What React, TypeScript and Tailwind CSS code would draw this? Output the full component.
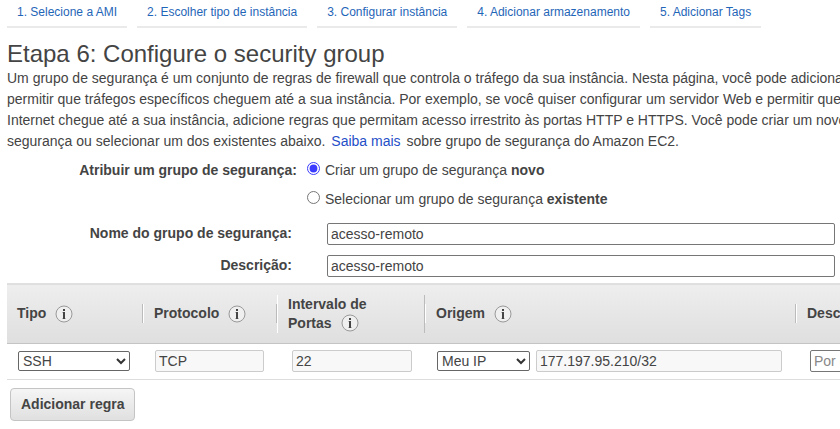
import type { ReactNode } from "react";

const steps = [
  "1. Selecione a AMI",
  "2. Escolher tipo de instância",
  "3. Configurar instância",
  "4. Adicionar armazenamento",
  "5. Adicionar Tags",
];

function InfoIcon() {
  return (
    <svg
      className="inline-block h-[18px] w-[18px] shrink-0"
      viewBox="0 0 18 18"
      role="img"
      aria-label="Informações"
    >
      <circle cx="9" cy="9" r="8" fill="#efefef" stroke="#999" strokeWidth="1" />
      <rect x="8" y="4" width="2" height="2" fill="#444" />
      <rect x="8" y="7" width="2" height="7" fill="#444" />
      <path d="M7 7h1v1H7zM7 13h1v1H7zM10 13h1v1h-1z" fill="#bbb" />
    </svg>
  );
}

function HeaderCell({
  children,
  first = false,
  last = false,
}: {
  children: ReactNode;
  first?: boolean;
  last?: boolean;
}) {
  return (
    <th scope="col" className="p-0 text-left align-middle font-bold">
      <div
        className={`pr-2 pl-[10px] leading-[19px] ${first ? "" : "border-l border-l-white"} ${
          last ? "" : "border-r border-r-[#bbb]"
        }`}
      >
        {children}
      </div>
    </th>
  );
}

function Select({ label, value, className }: { label: string; value: string; className: string }) {
  return (
    <span className={`relative inline-block h-5 ${className}`}>
      <select
        aria-label={label}
        defaultValue={value}
        className="block h-5 w-full appearance-none rounded-[2px] border border-[#666] bg-white pl-1 leading-[18px]"
      >
        <option>{value}</option>
      </select>
      <svg
        className="pointer-events-none absolute top-[6px] right-1 h-2 w-[10px]"
        viewBox="0 0 10 8"
        fill="none"
        stroke="#333"
        strokeWidth="2"
        aria-hidden="true"
      >
        <path d="M1 2l4 4 4-4" />
      </svg>
    </span>
  );
}

const textBox = "block h-[22px] rounded-[2px] border px-[3px] leading-5";
const activeBox = "border-[#767676] bg-white";
const lockedBox = "border-[#ccc] bg-[#f8f8f8]";

export default function App() {
  return (
    <main className="overflow-hidden bg-white pb-2 pl-[7px] font-['Liberation_Sans',Arial,sans-serif] text-[14px] text-[#444]">
      <nav className="flex gap-[10px] whitespace-nowrap text-[12px]" aria-label="Etapas">
        {steps.map((step) => (
          <a
            key={step}
            href="#"
            className="border-b-2 border-[#eaeaea] px-[10px] pt-1 pb-[6px] leading-4 text-[#1f66b8]"
          >
            {step}
          </a>
        ))}
      </nav>

      <h1 className="mt-3 text-[24px] leading-7">Etapa 6: Configure o security group</h1>
      <p className="leading-[21px] whitespace-nowrap">
        Um grupo de segurança é um conjunto de regras de firewall que controla o tráfego da sua
        instância. Nesta página, você pode adicionar
        <br />
        permitir que tráfegos específicos cheguem até a sua instância. Por exemplo, se você quiser
        configurar um servidor Web e permitir que
        <br />
        Internet chegue até a sua instância, adicione regras que permitam acesso irrestrito às
        portas HTTP e HTTPS. Você pode criar um novo
        <br />
        segurança ou selecionar um dos existentes abaixo.
        <a href="#" className="mx-[6px] text-[#1f4fc8]">
          Saiba mais
        </a>
        sobre grupo de segurança do Amazon EC2.
      </p>

      <form className="pt-[7px] pr-[5px]" onSubmit={(e) => e.preventDefault()}>
        <div role="radiogroup" aria-labelledby="assign" className="flex">
          <span id="assign" className="w-[290px] text-right leading-[22px] font-bold">
            Atribuir um grupo de segurança:
          </span>
          <div className="ml-[10px] flex flex-col gap-[7px] leading-[22px]">
            <label className="flex gap-[5px]">
              <input
                type="radio"
                name="group"
                defaultChecked
                className="m-0 mt-[3px] h-[13px] w-[13px] accent-[#3b3bff]"
              />
              <span>
                Criar um grupo de segurança <b>novo</b>
              </span>
            </label>
            <label className="flex gap-[5px]">
              <input type="radio" name="group" className="m-0 mt-[3px] h-[13px] w-[13px] accent-[#3b3bff]" />
              <span>
                Selecionar um grupo de segurança <b>existente</b>
              </span>
            </label>
          </div>
        </div>
        <div className="mt-[13px] grid grid-cols-[285px_1fr] gap-x-[35px] gap-y-[10px]">
          <label htmlFor="name" className="text-right leading-5 font-bold">
            Nome do grupo de segurança:
          </label>
          <input id="name" defaultValue="acesso-remoto" className={`${textBox} ${activeBox} w-full`} />
          <label htmlFor="description" className="text-right leading-5 font-bold">
            Descrição:
          </label>
          <input id="description" defaultValue="acesso-remoto" className={`${textBox} ${activeBox} w-full`} />
        </div>
      </form>

      <table className="mt-[6px] w-[1000px] min-w-full table-fixed border-collapse">
        <colgroup>
          <col className="w-[136px]" />
          <col className="w-[134px]" />
          <col className="w-[148px]" />
          <col className="w-[371px]" />
          <col />
        </colgroup>
        <thead>
          <tr className="h-[60px] border-t border-b border-t-[#e0e0e0] border-b-[#c4c4c4] bg-linear-to-b from-[#eee] to-[#dfdfdf]">
            <HeaderCell first>
              <span className="flex items-center gap-[9px]">
                Tipo <InfoIcon />
              </span>
            </HeaderCell>
            <HeaderCell>
              <span className="flex items-center gap-[9px]">
                Protocolo <InfoIcon />
              </span>
            </HeaderCell>
            <HeaderCell>
              <span className="block">Intervalo de</span>
              <span className="flex items-center gap-[9px]">
                Portas <InfoIcon />
              </span>
            </HeaderCell>
            <HeaderCell>
              <span className="flex items-center gap-[9px]">
                Origem <InfoIcon />
              </span>
            </HeaderCell>
            <HeaderCell last>Descrição</HeaderCell>
          </tr>
        </thead>
        <tbody>
          <tr className="h-9 border-b border-[#ddd]">
            <td className="p-0 pb-[2px] pl-[11px]">
              <Select label="Tipo" value="SSH" className="w-28 align-middle" />
            </td>
            <td className="p-0 pb-[2px] pl-3">
              <input aria-label="Protocolo" readOnly defaultValue="TCP" className={`${textBox} ${lockedBox} w-[109px]`} />
            </td>
            <td className="p-0 pb-[2px] pl-[15px]">
              <input aria-label="Intervalo de Portas" readOnly defaultValue="22" className={`${textBox} ${lockedBox} w-[120px]`} />
            </td>
            <td className="p-0 pb-[2px] pl-3">
              <div className="flex items-center gap-[6px]">
                <Select label="Origem" value="Meu IP" className="w-[93px]" />
                <input aria-label="Endereço de origem" readOnly defaultValue="177.197.95.210/32" className={`${textBox} ${lockedBox} w-[246px]`} />
              </div>
            </td>
            <td className="p-0 pb-[2px] pl-[14px]">
              <input aria-label="Descrição da regra" placeholder="Por exemplo" className={`${textBox} ${activeBox} w-[180px] placeholder:text-[#888]`} />
            </td>
          </tr>
        </tbody>
      </table>

      <button
        type="button"
        className="mt-2 ml-[3px] h-[33px] rounded-[4px] border border-[#c4c4c4] bg-linear-to-b from-[#f5f5f5] to-[#e0e0e0] px-[10px] font-bold"
      >
        Adicionar regra
      </button>
    </main>
  );
}
